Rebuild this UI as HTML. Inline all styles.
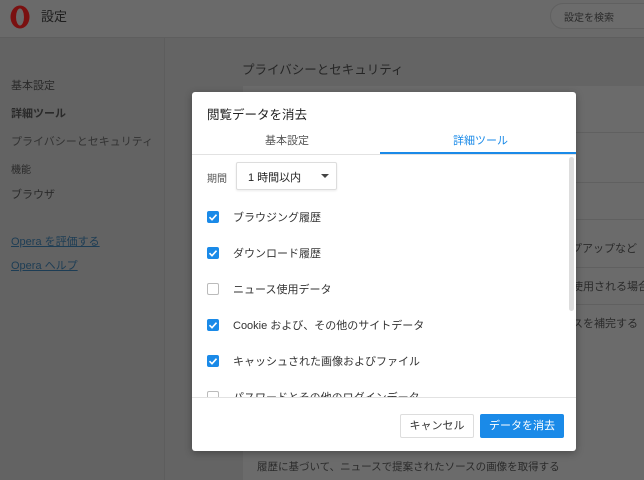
<!DOCTYPE html>
<html><head><meta charset="utf-8"><style>
*{margin:0;padding:0;box-sizing:border-box}
body{width:644px;height:480px;overflow:hidden;background:#646464;font-family:"Liberation Sans","Noto Sans CJK JP",sans-serif;position:relative;color:#2a2a2a}
.a{position:absolute;white-space:nowrap}
.hdr{left:0;top:0;width:644px;height:38px;background:#6a6a6a;border-bottom:1px solid #5e5e5e}
.side{left:0;top:38px;width:165px;height:442px;background:#636363;border-right:1px solid #5d5d5d}
.card{left:243px;background:#6b6b6b;width:401px}
.sl{font-size:11px;color:#2a2a2a}
.lnk{font-size:11px;color:#1d3d55;text-decoration:underline}
.dlg{left:192px;top:92px;width:384px;height:359px;background:#fff;border-radius:3px;box-shadow:0 2px 8px rgba(0,0,0,.3)}
.cb{left:15px;width:12px;height:12px;border-radius:2px;background:#1a8ae8}
.cb svg{position:absolute;left:0;top:0}
.un{background:#fff;border:1px solid #bbb}
.lb{left:41px;font-size:11px;color:#333}
</style></head><body>
<div class="a hdr"></div>
<svg class="a" style="left:9px;top:4px" width="22" height="26" viewBox="0 0 22 26"><ellipse cx="11" cy="13" rx="9.5" ry="11.5" fill="#7a1010"/><ellipse cx="11" cy="13" rx="4" ry="8.5" fill="#6a6a6a"/></svg>
<div class="a" style="left:41px;top:6px;font-size:13px;color:#1e1e1e">設定</div>
<div class="a" style="left:550px;top:3px;width:110px;height:26px;border:1px solid #606060;border-radius:13px;background:#6c6c6c"></div>
<div class="a" style="left:564px;top:9px;font-size:10px;color:#2a2a2a">設定を検索</div>
<div class="a side"></div>
<div class="a sl" style="left:11px;top:77px">基本設定</div>
<div class="a sl" style="left:11px;top:105px;font-weight:bold">詳細ツール</div>
<div class="a sl" style="left:11px;top:133px;color:#333">プライバシーとセキュリティ</div>
<div class="a sl" style="left:11px;top:161px;font-size:10px">機能</div>
<div class="a sl" style="left:11px;top:186px">ブラウザ</div>
<div class="a lnk" style="left:11px;top:233px">Opera を評価する</div>
<div class="a lnk" style="left:11px;top:257px">Opera ヘルプ</div>
<div class="a" style="left:242px;top:59px;font-size:12.5px;color:#252525">プライバシーとセキュリティ</div>
<div class="a card" style="top:86px;height:394px"></div>
<div class="a" style="left:243px;top:132px;width:401px;height:1px;background:#606060"></div>
<div class="a" style="left:243px;top:182px;width:401px;height:1px;background:#606060"></div>
<div class="a" style="left:243px;top:219px;width:401px;height:1px;background:#606060"></div>
<div class="a" style="left:243px;top:267px;width:401px;height:1px;background:#606060"></div>
<div class="a" style="left:243px;top:304px;width:401px;height:1px;background:#606060"></div>
<div class="a" style="left:560px;top:240px;font-size:11px;color:#2a2a2a">ップアップなど</div>
<div class="a" style="left:572px;top:278px;font-size:11px;color:#2a2a2a">使用される場合</div>
<div class="a" style="left:572px;top:315px;font-size:11px;color:#2a2a2a">スを補完する</div>
<div class="a" style="left:257px;top:459px;font-size:10.5px;color:#2a2a2a">履歴に基づいて、ニュースで提案されたソースの画像を取得する</div>
<div class="a dlg">
 <div class="a" style="left:15px;top:12px;font-size:12.5px;color:#222">閲覧データを消去</div>
 <div class="a" style="left:73px;top:40px;font-size:11px;color:#555">基本設定</div>
 <div class="a" style="left:261px;top:40px;font-size:11px;color:#1a8ae8">詳細ツール</div>
 <div class="a" style="left:0;top:62px;width:384px;height:1px;background:#e2e2e2"></div>
 <div class="a" style="left:188px;top:60px;width:196px;height:2px;background:#1a8ae8"></div>
 <div class="a" style="left:377px;top:65px;width:5px;height:154px;background:#ddd;border-radius:3px"></div>
 <div class="a" style="left:15px;top:78px;font-size:10px;color:#555">期間</div>
 <div class="a" style="left:44px;top:70px;width:101px;height:28px;border:1px solid #ddd;border-radius:2px;box-shadow:0 1px 2px rgba(0,0,0,.08)"></div>
 <div class="a" style="left:56px;top:77px;font-size:11px;color:#222">1 時間以内</div>
 <div class="a" style="left:129px;top:82px;width:0;height:0;border-left:4px solid transparent;border-right:4px solid transparent;border-top:4px solid #444"></div>
 <div class="a" style="left:0;top:63px;width:376px;height:242px;overflow:hidden">
  <div class="a cb" style="top:56px"><svg width="12" height="12"><path d="M2.5 6.2l2.5 2.5 4.5-5" stroke="#fff" stroke-width="1.6" fill="none"/></svg></div>
  <div class="a lb" style="top:54px">ブラウジング履歴</div>
  <div class="a cb" style="top:92px"><svg width="12" height="12"><path d="M2.5 6.2l2.5 2.5 4.5-5" stroke="#fff" stroke-width="1.6" fill="none"/></svg></div>
  <div class="a lb" style="top:90px">ダウンロード履歴</div>
  <div class="a cb un" style="top:128px"></div>
  <div class="a lb" style="top:126px">ニュース使用データ</div>
  <div class="a cb" style="top:164px"><svg width="12" height="12"><path d="M2.5 6.2l2.5 2.5 4.5-5" stroke="#fff" stroke-width="1.6" fill="none"/></svg></div>
  <div class="a lb" style="top:162px">Cookie および、その他のサイトデータ</div>
  <div class="a cb" style="top:200px"><svg width="12" height="12"><path d="M2.5 6.2l2.5 2.5 4.5-5" stroke="#fff" stroke-width="1.6" fill="none"/></svg></div>
  <div class="a lb" style="top:198px">キャッシュされた画像およびファイル</div>
  <div class="a cb un" style="top:236px"></div>
  <div class="a lb" style="top:234px">パスワードとその他のログインデータ</div>
 </div>
 <div class="a" style="left:0;top:305px;width:384px;height:1px;background:#e2e2e2"></div>
 <div class="a" style="left:208px;top:322px;width:74px;height:24px;border:1px solid #ddd;border-radius:2px;font-size:11px;color:#333;text-align:center;line-height:22px">キャンセル</div>
 <div class="a" style="left:288px;top:322px;width:84px;height:24px;background:#1a8ae8;border-radius:2px;font-size:11px;color:#fff;text-align:center;line-height:24px">データを消去</div>
</div>
</body></html>
